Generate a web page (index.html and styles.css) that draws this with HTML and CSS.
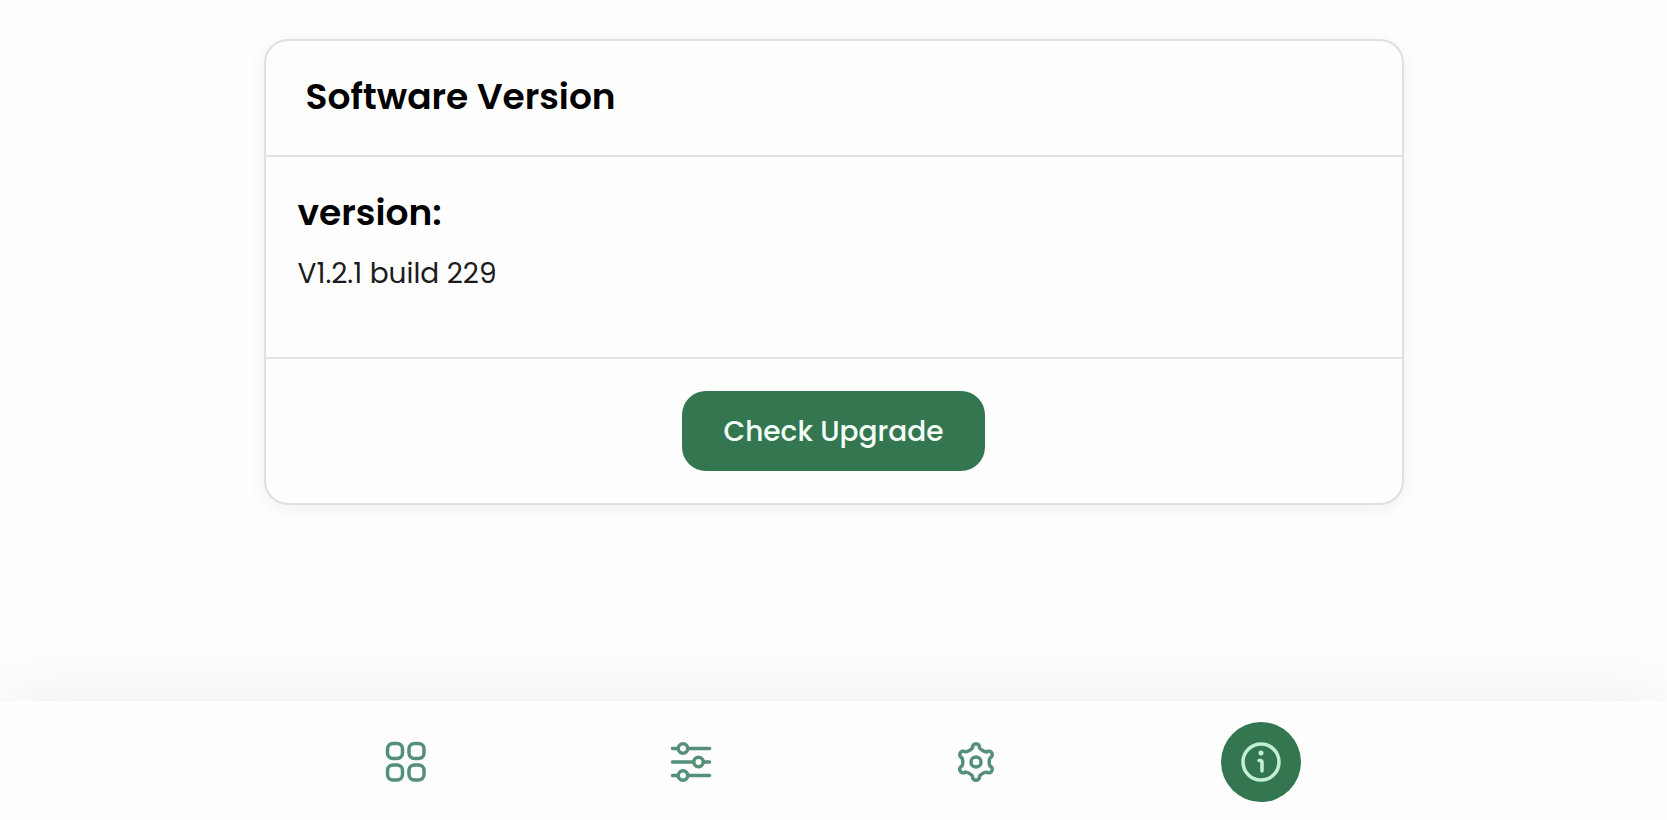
FILE: index.html
```html
<!DOCTYPE html>
<html lang="en">
<head>
    <meta charset="UTF-8">
    <meta name="viewport" content="width=device-width, initial-scale=1.0">
    <title>Software Version</title>
    <link rel="stylesheet" href="styles.css">
</head>
<body>

    <main class="page">
        <section class="card">
            <div class="card-header">
                <h1>Software Version</h1>
            </div>
            <div class="card-body">
                <h2>version:</h2>
                <p>V1.2.1 build 229</p>
            </div>
            <div class="card-footer">
                <button type="button" class="btn">Check Upgrade</button>
            </div>
        </section>
    </main>

    <!-- Bottom navigation -->
    <nav class="navbar">
        <div class="navbar-items">
            <a href="#dashboard" class="nav-link" aria-label="Dashboard">
                <svg viewBox="0 0 48 48">
                    <rect x="5.5" y="5.5" width="15" height="15" rx="5.5"/>
                    <rect x="27" y="5.5" width="15" height="15" rx="5.5"/>
                    <rect x="5.5" y="27" width="15" height="15" rx="5.5"/>
                    <rect x="27" y="27" width="15" height="15" rx="5.5"/>
                </svg>
            </a>
            <a href="#controls" class="nav-link" aria-label="Controls">
                <svg viewBox="0 0 48 48">
                    <path d="M5.5 10.5H11M21 10.5h21.5M5.5 24h21M36.5 24h6M5.5 37.5H11M21 37.5h21.5"/>
                    <circle cx="16" cy="10.5" r="4.75"/>
                    <circle cx="31.5" cy="24" r="4.75"/>
                    <circle cx="16" cy="37.5" r="4.75"/>
                </svg>
            </a>
            <a href="#settings" class="nav-link" aria-label="Settings">
                <svg viewBox="-24 -24 48 48">
                    <path id="tooth" d="M-3.5-14.7a3.5 3.5 0 0 1 7 0C3.5-12.8 9.3-9.4 10.98-10.38"/>
                    <use href="#tooth" transform="rotate(60)"/>
                    <use href="#tooth" transform="rotate(120)"/>
                    <use href="#tooth" transform="rotate(180)"/>
                    <use href="#tooth" transform="rotate(240)"/>
                    <use href="#tooth" transform="rotate(300)"/>
                    <circle r="5"/>
                </svg>
            </a>
            <a href="#about" class="nav-link active" aria-label="About">
                <svg viewBox="0 0 48 48">
                    <circle cx="24" cy="24" r="18"/>
                    <path d="M22 22.500h1.500a1.500 1.500 0 0 1 1.500 1.500v9"/>
                    <circle class="dot" cx="24" cy="15" r="2.5"/>
                </svg>
            </a>
        </div>
    </nav>

</body>
</html>
```
FILE: styles.css
```css
* {
    margin: 0;
    padding: 0;
    box-sizing: border-box;
}

body {
    display: flex;
    flex-direction: column;
    min-height: 100vh;
    font-family: Poppins, Inter, "Open Sans", sans-serif;
    background-color: #fefefe;
    color: #000;
}

.page {
    flex: 1;
    padding: 39px 24px;
}

.card {
    max-width: 1140px;
    margin: 0 auto;
    background-color: #fefefe;
    border: 2px solid #e0e0e0;
    border-radius: 24px;
    box-shadow: 0 4px 20px rgba(0, 0, 0, 0.06);
}

.card-header {
    padding: 31px 40px 33px;
    border-bottom: 2px solid #e3e3e3;
}

.card-body {
    padding: 31px 32px 63px;
    border-bottom: 2px solid #e3e3e3;
}

h1,
h2 {
    font-size: 36px;
    line-height: 50px;
    font-weight: 600;
}

.card-body p {
    margin-top: 16px;
    font-size: 28px;
    line-height: 40px;
    color: #1c1c1c;
}

.card-footer {
    display: flex;
    justify-content: center;
    padding: 32px;
}

.btn {
    padding: 21px 42px 19px;
    border: none;
    border-radius: 24px;
    background-color: #33764f;
    color: #f4fff9;
    font-family: inherit;
    font-size: 28px;
    line-height: 40px;
    font-weight: 500;
    cursor: pointer;
}

.btn:hover {
    background-color: #2b6543;
}

/* Navigation */
.navbar {
    padding: 21px 24px 18px;
    background-color: #fefefe;
    box-shadow: 0 0 72px rgba(38, 84, 66, 0.09);
}

.navbar-items {
    display: grid;
    grid-template-columns: repeat(4, 1fr);
    justify-items: center;
    max-width: 1140px;
    margin: 0 auto;
}

.nav-link {
    display: flex;
    align-items: center;
    justify-content: center;
    width: 80px;
    height: 80px;
    border-radius: 50%;
    color: #548f78;
}

.nav-link.active {
    background-color: #33764f;
    color: #c3efd4;
}

.nav-link svg {
    width: 48px;
    height: 48px;
    fill: none;
    stroke: currentColor;
    stroke-width: 3.5;
    stroke-linecap: round;
    stroke-linejoin: round;
}

.nav-link .dot {
    fill: currentColor;
    stroke: none;
}
```
